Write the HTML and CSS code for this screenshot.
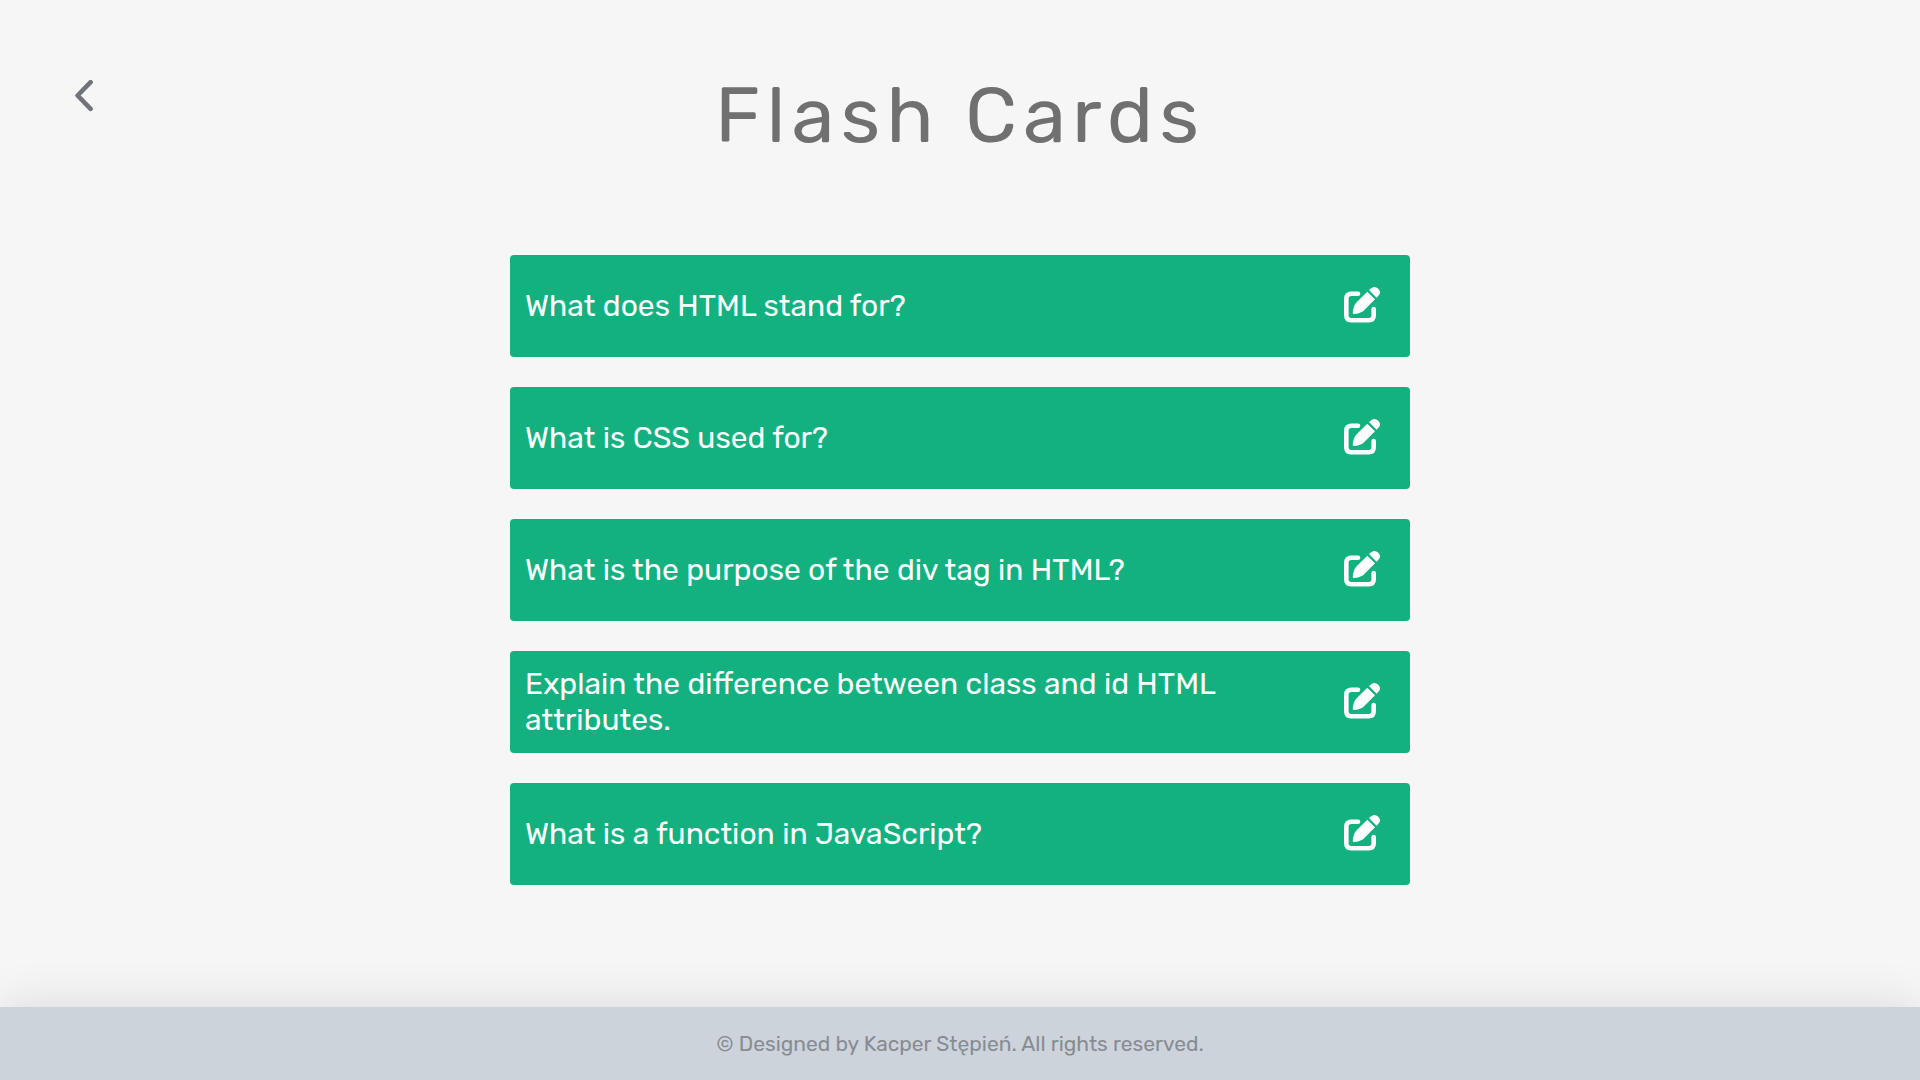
FILE: index.html
```html
<!DOCTYPE html>
<html lang="en">
<head>
<meta charset="utf-8">
<meta name="viewport" content="width=device-width, initial-scale=1">
<title>Flash Cards</title>
<link rel="stylesheet" href="styles.css">
</head>
<body>
<svg class="sprite" aria-hidden="true">
  <symbol id="icon-edit" viewBox="0 0 36 38">
    <path d="M14 7.8H7.3Q2.3 7.8 2.3 12.8V29.2Q2.3 34.2 7.3 34.2H24.7Q29.7 34.2 29.7 29.2V23" fill="none" stroke="currentColor" stroke-width="4.6" stroke-linecap="round"/>
    <path d="M23.3 5.7L31 13.3L18.8 25.5Q14 28 10 28Q8.2 28 9 25Q9.6 19.5 12.2 16.8Z" fill="currentColor"/>
    <path d="M25 4.1L27.6 1.9Q31 -.3 34.2 2.7Q37.4 5.9 35 9.1L32.6 11.7Z" fill="currentColor"/>
  </symbol>
</svg>
<header class="header">
  <a class="back" href="#" aria-label="Back">
    <svg class="back-icon" viewBox="0 0 18 32" aria-hidden="true"><path d="M15.6 2.2L2.6 15.5L15.6 28.8" fill="none" stroke="currentColor" stroke-width="4.6" stroke-linecap="round" stroke-linejoin="round"/></svg>
  </a>
  <h1 class="title">Flash Cards</h1>
</header>
<main class="main">
  <ul class="cards">
    <li class="card"><span class="question">What does HTML stand for?</span><button class="edit" type="button" aria-label="Edit"><svg class="edit-icon"><use href="#icon-edit"/></svg></button></li>
    <li class="card"><span class="question">What is CSS used for?</span><button class="edit" type="button" aria-label="Edit"><svg class="edit-icon"><use href="#icon-edit"/></svg></button></li>
    <li class="card"><span class="question">What is the purpose of the div tag in HTML?</span><button class="edit" type="button" aria-label="Edit"><svg class="edit-icon"><use href="#icon-edit"/></svg></button></li>
    <li class="card"><span class="question">Explain the difference between class and id HTML attributes.</span><button class="edit" type="button" aria-label="Edit"><svg class="edit-icon"><use href="#icon-edit"/></svg></button></li>
    <li class="card"><span class="question">What is a function in JavaScript?</span><button class="edit" type="button" aria-label="Edit"><svg class="edit-icon"><use href="#icon-edit"/></svg></button></li>
  </ul>
</main>
<footer class="footer">© Designed by Kacper Stępień. All rights reserved.</footer>
</body>
</html>
```
FILE: styles.css
```css
* {
  box-sizing: border-box;
}

body {
  margin: 0;
  min-height: 100vh;
  display: flex;
  flex-direction: column;
  background: #f6f6f6;
  color: #707070;
  font-family: Rubik, Inter, sans-serif;
}

.sprite {
  display: none;
}

.header {
  display: grid;
  grid-template-columns: 1fr auto 1fr;
  align-items: start;
  padding: 68px 75px 0;
}

.back {
  display: flex;
  justify-self: start;
  padding-top: 12px;
  color: #707478;
}

.back-icon {
  width: 18px;
  height: 32px;
}

.title {
  margin: 0;
  font-size: 78px;
  line-height: 95px;
  font-weight: 400;
  letter-spacing: 6px;
}

.main {
  flex: 1;
  padding: 92px 24px 60px;
}

.cards {
  display: flex;
  flex-direction: column;
  gap: 30px;
  max-width: 900px;
  margin: 0 auto;
  padding: 0;
  list-style: none;
}

.card {
  display: flex;
  align-items: center;
  justify-content: space-between;
  gap: 100px;
  min-height: 102px;
  padding: 15px 30px 15px 15px;
  border-radius: 4px;
  background: #14b180;
  color: #fff;
}

.question {
  font-size: 30px;
  line-height: 36px;
}

.edit {
  display: flex;
  flex: none;
  padding: 0 0 2px;
  border: 0;
  background: none;
  color: inherit;
  cursor: pointer;
}

.edit-icon {
  width: 36px;
  height: 38px;
}

.footer {
  padding: 24px;
  background: #cdd3db;
  box-shadow: 0 0 50px rgba(0, 0, 0, 0.12);
  color: #868c92;
  font-size: 21px;
  line-height: 25px;
  text-align: center;
}
```
